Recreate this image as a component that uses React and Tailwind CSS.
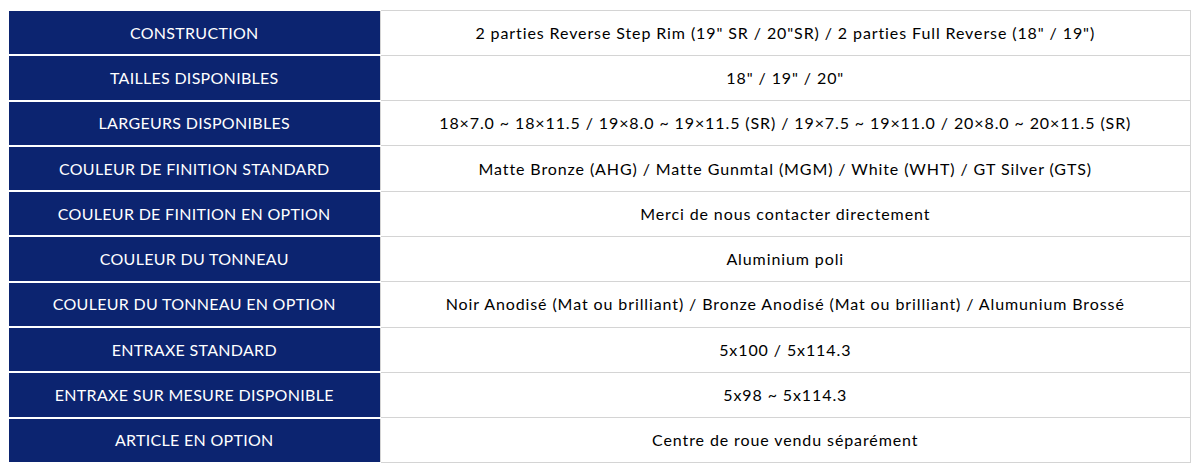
const rows = [
  ["CONSTRUCTION", "2 parties Reverse Step Rim (19\" SR / 20\"SR) / 2 parties Full Reverse (18\" / 19\")"],
  ["TAILLES DISPONIBLES", "18\" / 19\" / 20\""],
  ["LARGEURS DISPONIBLES", "18×7.0 ~ 18×11.5 / 19×8.0 ~ 19×11.5 (SR) / 19×7.5 ~ 19×11.0 / 20×8.0 ~ 20×11.5 (SR)"],
  ["COULEUR DE FINITION STANDARD", "Matte Bronze (AHG) / Matte Gunmtal (MGM) / White (WHT) / GT Silver (GTS)"],
  ["COULEUR DE FINITION EN OPTION", "Merci de nous contacter directement"],
  ["COULEUR DU TONNEAU", "Aluminium poli"],
  ["COULEUR DU TONNEAU EN OPTION", "Noir Anodisé (Mat ou brilliant) / Bronze Anodisé (Mat ou brilliant) / Alumunium Brossé"],
  ["ENTRAXE STANDARD", "5x100 / 5x114.3"],
  ["ENTRAXE SUR MESURE DISPONIBLE", "5x98 ~ 5x114.3"],
  ["ARTICLE EN OPTION", "Centre de roue vendu séparément"],
];

export default function App() {
  return (
    <div className="w-[1200px] h-[473px] bg-white pt-[9px] px-[9px] font-['Lato','Open_Sans',sans-serif]">
      <table className="w-[1182px] border-collapse">
        <tbody>
          {rows.map(([label, value]) => (
            <tr key={label} className="h-[45.3px]">
              <td className="w-[371px] bg-[#0c2470] text-white text-[16px] tracking-[0.3px] text-center border-y-2 border-white">
                {label}
              </td>
              <td className="text-[16px] tracking-[0.9px] text-black text-center border border-[#d4d4d4]">
                {value}
              </td>
            </tr>
          ))}
        </tbody>
      </table>
    </div>
  );
}
